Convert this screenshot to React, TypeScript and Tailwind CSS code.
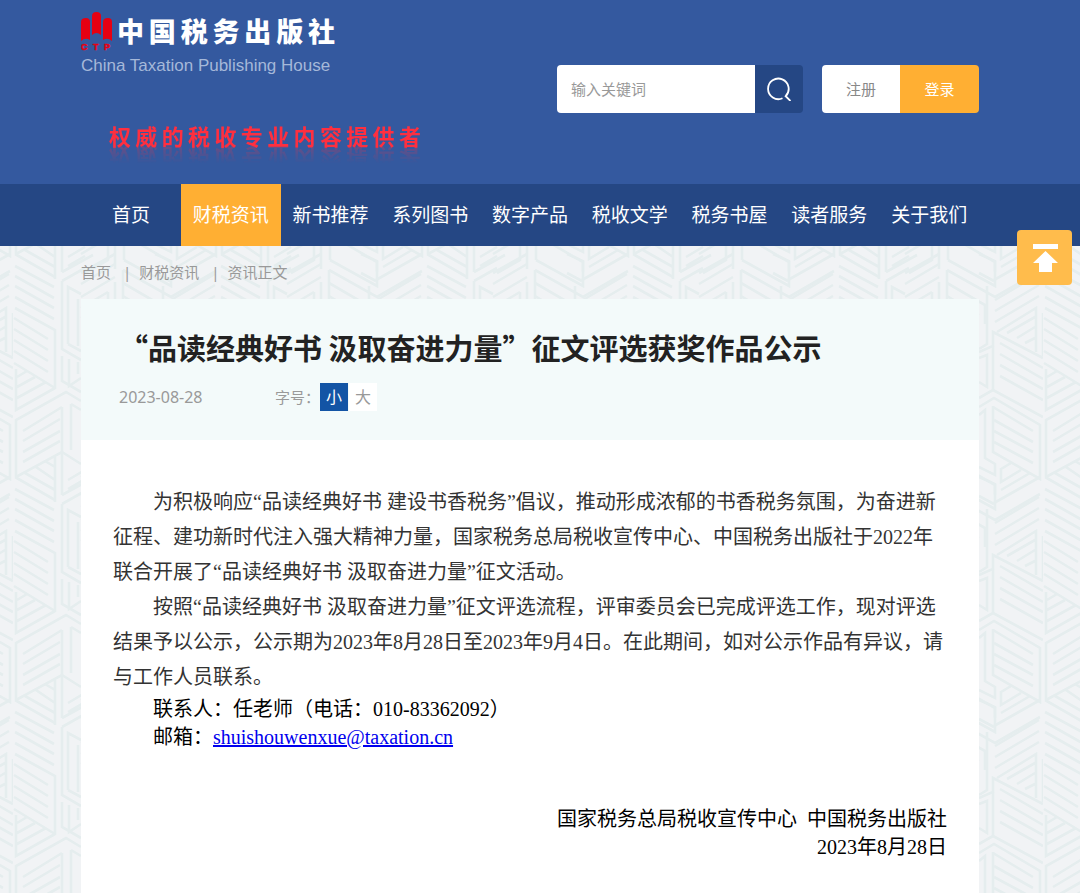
import { useState } from 'react'
import clsx from 'clsx'

const NAV_ITEMS = [
  '首页',
  '财税资讯',
  '新书推荐',
  '系列图书',
  '数字产品',
  '税收文学',
  '税务书屋',
  '读者服务',
  '关于我们',
]

const BRAND = ['中', '国', '税', '务', '出', '版', '社']
const SLOGAN = ['权', '威', '的', '税', '收', '专', '业', '内', '容', '提', '供', '者']

// One 206x223 tile of the hatched background, split by column
const HATCH = [
  // left column
  'M3 8 49 -17 68 -5M12 4 42 21M23 -2 42 11M32 -8 42 -2M42 -12V33',
  'M2 8 42 31M2 20 41 41M2 30 41 52M2 40 41 62M2 51 41 73M2 62 42 84V143',
  'M1 72 35 93M1 83 35 104M1 94 35 115M1 105 35 126M1 117 42 142',
  'M3 123V164L42 142M4 131 14 125M4 141 22 131M4 152 33 136',
  'M3 231V174L53 146 68 155M10 185 49 161M10 195 47 173M10 206 47 185M10 216 47 195',
  'M49 161V249M49 26 80 9M49 35 72 22M49 35V103L68 114M55 11 72 1M55 20 72 10',
  'M55 98V41L68 48M55 98 68 105M65 53V100M49 110V135L68 146M56 113V140L68 132M65 116V128',
  'M58 158V204M58 158 68 164',
  // middle column
  'M68 27 102 8M68 38 102 18M68 51 102 31M68 62 95 46M68 72 95 56M68 8 95 -8',
  'M95 -14V14L72 27M102 -16V23M111 -18V14M110 24V74M102 36V80M95 46V92',
  'M110 24 158 51 203 25M110 37 148 59V78M110 50 142 69M110 60 138 76M111 14 158 40V16L120 -6',
  'M72 90 102 108 138 88M72 102 102 120 138 99M80 118V170M88 123V170M98 130V170M110 130V180L138 164',
  'M118 125V172M126 120V168M72 178 106 198 138 180M72 190 106 209 138 191M72 201 95 214',
  // right column
  'M158 54 202 28M158 65 202 39M158 76 202 50M160 86 199 62V106M170 87 198 71M180 92 198 81M188 97 198 92',
  'M206 67V110M142 106 156 100V86L206 112M163 97 206 122M163 108 206 133M163 119 206 143M163 130 206 154',
  'M156 100V144L142 152M142 161 157 152 203 179V233L156 206V160',
  'M156 161 196 185M157 174 196 196M157 185 196 206M157 196 196 217M156 144 206 171',
  'M150 40V98L142 103M142 112 150 109V141L142 136M142 169 148 164V212L158 218V229L142 221M142 231 158 238V249M142 250 157 258',
  'M164 223 174 217M164 222V236L184 224M164 244 193 227M157 257 203 231',
]

const HEI = "font-['Noto_Sans','Noto_Sans_CJK_SC',sans-serif]"

function PageBackdrop() {
  return (
    <svg className="absolute inset-0 h-full w-full" aria-hidden="true">
      <defs>
        <pattern id="hatch" x="13" y="0" width="206" height="223" patternUnits="userSpaceOnUse">
          <g fill="none" stroke="#e5edee" strokeWidth="2.6">
            {/* repeated above and below so lines carry on over the tile edge */}
            {[-223, 0, 223].map((dy) => (
              <g key={dy} transform={`translate(0 ${dy})`}>
                {HATCH.map((d) => (
                  <path key={d} d={d} />
                ))}
              </g>
            ))}
          </g>
        </pattern>
      </defs>
      <rect width="100%" height="100%" fill="url(#hatch)" />
    </svg>
  )
}

function Emblem() {
  return (
    <svg className="h-10 w-8" viewBox="0 0 32 40" aria-hidden="true">
      <g fill="#e60012">
        <path d="M0 10Q0 6 5 6Q9 6 9 10V28Q4.500 25 0 29Z" />
        <path d="M11 4Q11 0 15.500 0Q20 0 20 4V23Q15.500 19 11 23Z" />
        <path d="M22 10Q22 6 27 6Q31 6 31 10V29Q26.500 25 22 28Z" />
      </g>
      <text
        x="0 12 23"
        y="38"
        fill="#e60012"
        stroke="#e60012"
        strokeWidth="0.5"
        fontSize="9"
        fontWeight="700"
        fontFamily="Liberation Sans, sans-serif"
      >
        CTP
      </text>
    </svg>
  )
}

function Header() {
  return (
    <header className="bg-[#34599f] pr-5">
      <div className="mx-auto flex h-[184px] max-w-[898px] justify-between">
        <div>
          <a href="#" className="block pt-3">
            <span className="flex items-center gap-1">
              <Emblem />
              <span className="flex w-[218px] justify-between text-[27px] leading-[36px] font-black text-white">
                {BRAND.map((ch) => (
                  <span key={ch}>{ch}</span>
                ))}
              </span>
            </span>
            <span className="mt-1 block font-['Liberation_Sans',sans-serif] text-[17px] leading-5 text-[#a5b8d9]">
              China Taxation Publishing House
            </span>
          </a>
          <p className="mt-12 ml-7 flex w-[312px] justify-between text-[22px] leading-6 font-bold text-[#ff2f3f] [-webkit-box-reflect:below_-4px_linear-gradient(transparent_20%,rgba(0,0,0,0.3))]">
            {SLOGAN.map((ch) => (
              <span key={ch}>{ch}</span>
            ))}
          </p>
        </div>

        <div className="mt-[65px] flex h-12 gap-[19px] text-[15px]">
          <form className="flex overflow-hidden rounded" onSubmit={(e) => e.preventDefault()}>
            <input
              type="text"
              aria-label="输入关键词"
              placeholder="输入关键词"
              className="w-[198px] bg-white px-3.5 text-[#555] outline-none placeholder:text-[#999]"
            />
            <button type="submit" aria-label="搜索" className="flex w-12 items-center justify-center bg-[#254784]">
              <svg className="h-6 w-6" viewBox="0 0 24 24" fill="none" stroke="#fff" strokeWidth="1.8">
                <path d="M15.500 21.300A10.300 10.300 0 1 1 18.600 19.200M18 18.500 23.500 24" />
              </svg>
            </button>
          </form>
          <div className="flex overflow-hidden rounded">
            <button type="button" className="w-[78px] bg-white text-[#888]">
              注册
            </button>
            <button type="button" className="w-[79px] bg-[#ffaf33] text-white">
              登录
            </button>
          </div>
        </div>
      </div>
    </header>
  )
}

function NavBar() {
  return (
    <nav className="bg-[#254784] pr-5">
      <ul className="mx-auto flex max-w-[898px]">
        {NAV_ITEMS.map((item) => (
          <li key={item} className="flex-1">
            <a
              href="#"
              className={clsx(
                'block text-center text-[19px] leading-[62px] whitespace-nowrap text-white',
                item === '财税资讯' && 'bg-[#ffaf33]',
              )}
            >
              {item}
            </a>
          </li>
        ))}
      </ul>
    </nav>
  )
}

function Breadcrumb() {
  return (
    <div className="flex h-[53px] items-center text-[15px] text-[#999]">
      <a href="#">首页</a>
      <span className="mr-2 ml-3">|</span>
      <a href="#">财税资讯</a>
      <span className="mr-2 ml-3">|</span>
      <span>资讯正文</span>
    </div>
  )
}

function Article() {
  const [size, setSize] = useState('小')

  return (
    <article className="flex-1 bg-white">
      {/* Title block */}
      <div className="h-[141px] bg-[#f3fafa] px-[38px] pt-7">
        <h1 className="font-['Noto_Sans_CJK_SC',sans-serif] text-[29px] leading-10 font-bold text-[#222]">
          “品读经典好书 汲取奋进力量”征文评选获奖作品公示
        </h1>
        <div className="mt-4 flex items-center text-[#999]">
          <time dateTime="2023-08-28" className="w-[156px] text-[16px]">
            2023-08-28
          </time>
          <span className="text-[15px]">字号：</span>
          <div className="flex gap-px text-[16px]">
            {['小', '大'].map((s) => (
              <button
                key={s}
                type="button"
                onClick={() => setSize(s)}
                className={clsx('h-7 w-7', s === size ? 'bg-[#1354a5] text-white' : 'bg-white')}
              >
                {s}
              </button>
            ))}
          </div>
        </div>
      </div>

      {/* Body */}
      <div className="px-8 pt-[45px] pb-6 font-['Liberation_Serif','Noto_Sans_CJK_SC',serif] text-[20px] leading-7 text-black">
        <div className="indent-10 leading-[35px] text-[#333]">
          <p>
            为积极响应“品读经典好书 建设书香税务”倡议，推动形成浓郁的书香税务氛围，为奋进新征程、建功新时代注入强大精神力量，国家税务总局税收宣传中心、中国税务出版社于2022年联合开展了“品读经典好书
            汲取奋进力量”征文活动。
          </p>
          <p>
            按照“品读经典好书 汲取奋进力量”征文评选流程，评审委员会已完成评选工作，现对评选结果予以公示，公示期为2023年8月28日至2023年9月4日。在此期间，如对公示作品有异议，请与工作人员联系。
          </p>
        </div>
        <p className="indent-10">联系人：任老师（电话：010-83362092）</p>
        <p className="indent-10">
          邮箱：
          <a href="mailto:shuishouwenxue@taxation.cn" className="text-[#0000ee] underline">
            shuishouwenxue@taxation.cn
          </a>
        </p>
        <div className="mt-[54px] text-right">
          <p>国家税务总局税收宣传中心&nbsp; 中国税务出版社</p>
          <p>2023年8月28日</p>
        </div>
      </div>
    </article>
  )
}

function BackToTop() {
  return (
    <button
      type="button"
      aria-label="返回顶部"
      onClick={() => window.scrollTo({ top: 0 })}
      className="fixed top-[230px] right-2 flex h-[55px] w-[55px] items-center justify-center rounded bg-[#ffbc4c]"
    >
      <svg className="h-7 w-7" viewBox="0 0 28 28" fill="#fff" aria-hidden="true">
        <path d="M2 0H27V5H2ZM14.500 7 27 19H21V28H8V19H2Z" />
      </svg>
    </button>
  )
}

export default function App() {
  return (
    <div lang="zh-CN" className={clsx('flex min-h-screen flex-col bg-[#f1f3f5]', HEI)}>
      <Header />
      <NavBar />
      <main className="relative flex flex-1 flex-col pr-5">
        <PageBackdrop />
        <div className="relative mx-auto flex w-full max-w-[898px] flex-1 flex-col">
          <Breadcrumb />
          <Article />
        </div>
      </main>
      <BackToTop />
    </div>
  )
}
